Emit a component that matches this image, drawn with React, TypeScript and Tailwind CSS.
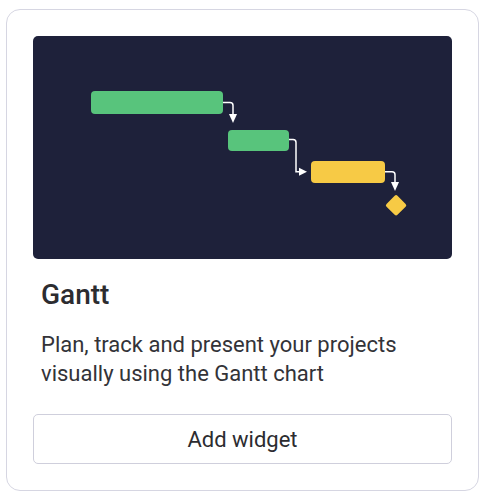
export default function App() {
  return (
    <div className="min-h-screen bg-white pl-[6px] pt-[9px]" style={{ fontFamily: "Roboto, 'Noto Sans', sans-serif" }}>
      <div className="w-[473px] h-[482px] rounded-[14px] border border-[#d6d6e2] bg-white px-[26px] pt-[26px] flex flex-col">
        <div className="h-[223px] w-full rounded-[5px] bg-[#1e213a] overflow-hidden">
          <svg width="419" height="223" viewBox="0 0 419 223">
            <rect x="58" y="55" width="132" height="23" rx="4" fill="#58c47c" />
            <rect x="195" y="94" width="61" height="21" rx="4" fill="#58c47c" />
            <rect x="278" y="125" width="74" height="22" rx="4" fill="#f7ca45" />
            <g fill="none" stroke="#ffffff" strokeWidth="1.5">
              <path d="M190 66.5 H197 Q200 66.5 200 69.5 V79" />
              <path d="M256 103.5 H260 Q263 103.5 263 106.5 V135.7 H268" />
              <path d="M352 135.7 H359 Q362 135.7 362 138.7 V147" />
            </g>
            <g fill="#ffffff">
              <polygon points="196,78 204,78 200,87" />
              <polygon points="266,131.7 266,139.7 274,135.7" />
              <polygon points="358,146 366,146 362,155" />
            </g>
            <rect x="355.3" y="161.5" width="15.5" height="15.5" rx="2" fill="#f7ca45" transform="rotate(45 363 169.3)" />
          </svg>
        </div>
        <div className="px-[8px]">
          <h2 className="mt-[19px] text-[28px] leading-[34px] font-medium text-[#2c2c30]">Gantt</h2>
          <p className="mt-[18px] text-[22px] leading-[29px] text-[#333338]">
            Plan, track and present your projects visually using the Gantt chart
          </p>
        </div>
        <button className="mt-[26px] h-[50px] w-full rounded-[5px] border border-[#cfcfdc] bg-white text-[22px] text-[#2c2c30]">
          Add widget
        </button>
      </div>
    </div>
  );
}
